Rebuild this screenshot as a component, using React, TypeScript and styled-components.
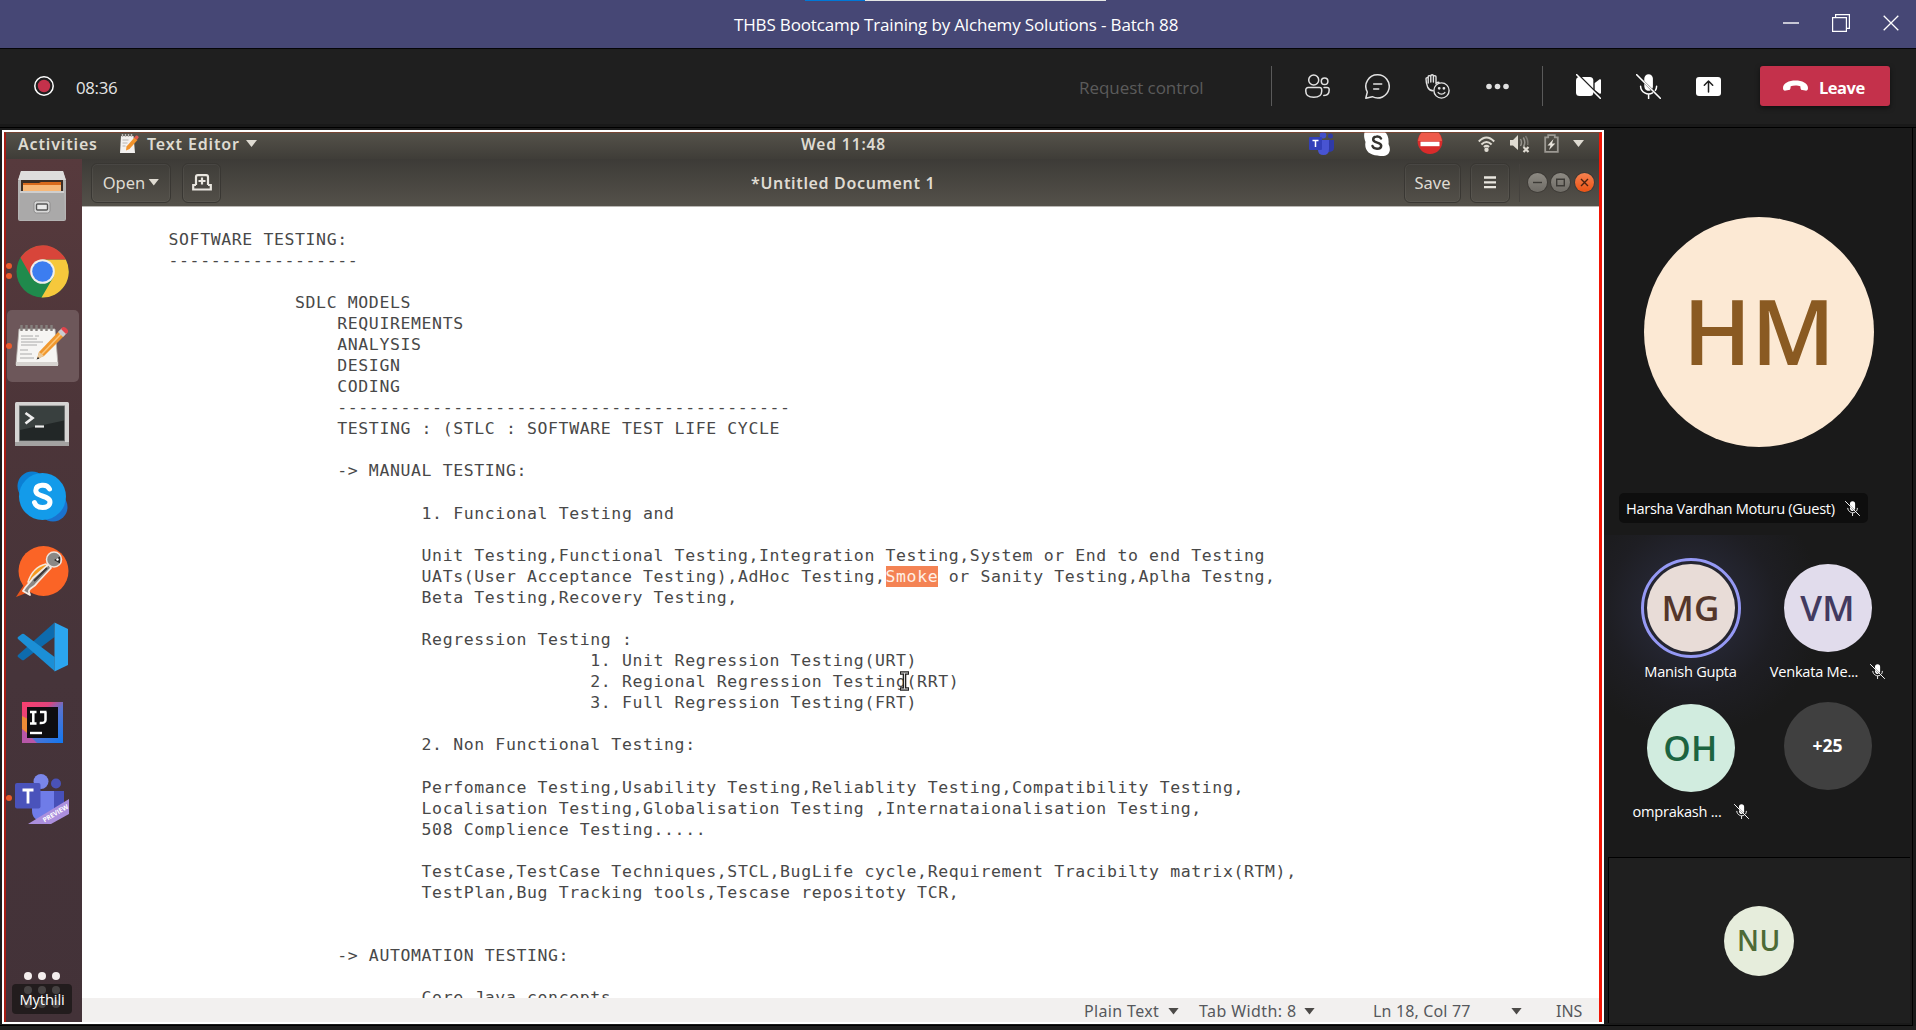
import React from 'react';
import styled, { createGlobalStyle, css } from 'styled-components';

const segoe = `"Open Sans", "Noto Sans", sans-serif`;
const ubuntu = `"Noto Sans", "Open Sans", sans-serif`;
const mono = `"DejaVu Sans Mono", monospace`;

const Global = createGlobalStyle`
  * { box-sizing: border-box; }
  html, body { margin: 0; background: #1a1a1a; overflow: hidden; }
  svg { display: block; flex: none; }
`;

const Window = styled.div`
  width: 1916px;
  height: 1030px;
  display: flex;
  flex-direction: column;
  overflow: hidden;
  background: #1a1a1a;
  font-family: ${segoe};
  color: #fff;
`;

/* Fixed-metric text: $w is the box width, $ls the tracking */
const Label = styled.span<{ $size: number; $ls?: number; $w?: number; $weight?: number; $color?: string; $ui?: boolean }>`
  font-family: ${p => (p.$ui ? ubuntu : segoe)};
  font-size: ${p => p.$size}px;
  letter-spacing: ${p => p.$ls ?? 0}px;
  font-weight: ${p => p.$weight ?? 400};
  color: ${p => p.$color ?? 'inherit'};
  white-space: nowrap;
  flex: none;
  ${p => p.$w && css`width: ${p.$w}px;`}
`;

/* ---------- title bar ---------- */
const TitleBar = styled.header`
  height: 49px;
  flex: none;
  display: grid;
  grid-template-columns: 734px 1fr 133px;
  align-items: center;
  background: #464775;
  border-bottom: 1px solid #050508;
  position: relative;
`;
const ShareStrip = styled.div`
  position: absolute;
  top: 0;
  left: 805px;
  width: 301px;
  height: 1px;
  background: linear-gradient(to right, #0078d7 60px, #e4e6e4 60px);
`;
const TitleText = styled.div`
  grid-column: 2;
  padding-top: 1px;
`;
const WindowButtons = styled.div`
  display: flex;
  align-items: center;
  gap: 33px;
  padding-bottom: 2px;
`;

/* ---------- meeting toolbar ---------- */
const Toolbar = styled.div`
  height: 79px;
  flex: none;
  display: flex;
  align-items: center;
  background: #1f1f1f;
  border-bottom: 1px solid #000;
  box-shadow: inset 0 -3px 0 #191919;
  padding: 0 26px 4px 34px;
`;
const Timer = styled.div`
  display: flex;
  align-items: center;
  gap: 22px;
  flex: 1;
`;
const Lowered = styled.div`
  padding-top: 2px;
  flex: none;
  display: flex;
`;
const Divider = styled.i`
  width: 1px;
  height: 40px;
  background: #5a5a5a;
`;
const IconRow = styled.div<{ $ml: number; $mr: number }>`
  display: flex;
  gap: 35px;
  margin: 0 ${p => p.$mr}px 0 ${p => p.$ml}px;
`;
const LeaveButton = styled.button`
  width: 130px;
  height: 40px;
  padding: 0 0 0 23px;
  border: 0;
  border-radius: 3px;
  background: #c4314b;
  color: #fff;
  display: flex;
  align-items: center;
  gap: 11px;
  box-shadow: 0 2px 5px rgba(0, 0, 0, 0.5);
`;

/* ---------- stage ---------- */
const Stage = styled.main`
  height: 898px;
  flex: none;
  display: flex;
  width: 1913px;
  border-right: 1px solid #000;
  border-bottom: 1px solid #000;
  padding: 2px 0 2px 2px;
`;
const Footer = styled.div`
  flex: 1;
  background: #1f1f1f;
`;
const SharedScreen = styled.section`
  width: 1602px;
  height: 894px;
  flex: none;
  border: 2px solid #fff;
  display: flex;
  flex-direction: column;
  position: relative;
  background: #fff;
  &::after {
    content: '';
    position: absolute;
    inset: 0;
    border-left: 2px solid #a51d14;
    border-right: 3px solid #f01505;
    border-top: 1px solid rgba(150, 60, 35, 0.55);
    pointer-events: none;
  }
`;
const GnomeBar = styled.div`
  height: 27px;
  flex: none;
  display: flex;
  align-items: center;
  padding: 0 0 4px 14px;
  color: #dfdbd2;
  background: linear-gradient(#55524a, #3f3d38);
`;
const Desktop = styled.div`
  flex: 1;
  display: flex;
  min-height: 0;
`;
const Dock = styled.nav`
  width: 78px;
  flex: none;
  padding: 0 0 0 2px;
  background: linear-gradient(#573a3d, #4c3539 30%, #46343a 60%, #433238);
  display: flex;
  flex-direction: column;
  position: relative;
`;
const DockItem = styled.div<{ $active?: boolean; $drop?: number }>`
  height: 72px;
  width: 72px;
  margin: 1px 0 2.2px 1px;
  padding: ${p => p.$drop ?? 0}px 2px 0 0;
  flex: none;
  border-radius: 5px;
  display: flex;
  align-items: center;
  justify-content: center;
  background: ${p => (p.$active ? '#6d575a' : 'transparent')};
  position: relative;
`;
const RunDots = styled.div`
  position: absolute;
  left: -1px;
  top: 0;
  height: 100%;
  display: flex;
  flex-direction: column;
  justify-content: center;
  gap: 4px;
  i { width: 6px; height: 6px; border-radius: 50%; background: #ea5b2d; }
`;
const AppGrid = styled.div`
  margin: auto 0 14px 18px;
  display: grid;
  grid-template-columns: repeat(3, 8px);
  gap: 6px;
  i { width: 8px; height: 8px; border-radius: 50%; background: #f4eeee; }
`;
const PresenterTag = styled.div`
  position: absolute;
  left: 8px;
  bottom: 8px;
  width: 60px;
  height: 30px;
  border-radius: 4px;
  background: rgba(26, 22, 23, 0.8);
  color: #fff;
  display: flex;
  align-items: center;
  justify-content: center;
  z-index: 2;
`;
const Editor = styled.div`
  flex: 1;
  min-width: 0;
  display: flex;
  flex-direction: column;
`;
const HeaderBar = styled.div`
  height: 47px;
  flex: none;
  display: flex;
  align-items: center;
  padding: 0 0 0 9px;
  color: #dfdbd2;
  background: linear-gradient(#3d3b37, #54514a);
`;
const HeaderButton = styled.div<{ $w: number; $ml?: number }>`
  width: ${p => p.$w}px;
  height: 40px;
  margin-left: ${p => p.$ml ?? 0}px;
  padding-bottom: 1px;
  flex: none;
  border: 1px solid #393733;
  border-radius: 6px;
  box-shadow: inset 0 0 0 1px rgba(255, 255, 255, 0.05);
  display: flex;
  align-items: center;
  justify-content: center;
  gap: 3px;
`;
const Arrow = styled.i<{ $c?: string; $ml?: number; $mr?: number }>`
  flex: none;
  width: 11px;
  height: 7px;
  margin: 0 ${p => p.$mr ?? 0}px 0 ${p => p.$ml ?? 0}px;
  background: ${p => p.$c ?? '#dfdbd2'};
  clip-path: polygon(0 0, 100% 0, 50% 100%);
`;
const Round = styled.i<{ $close?: boolean }>`
  width: 19px;
  height: 19px;
  margin-right: 4.3px;
  flex: none;
  border-radius: 50%;
  background: ${p => (p.$close ? 'linear-gradient(#f5814f, #ec5315)' : 'linear-gradient(#8d8a83, #6f6c66)')};
  box-shadow: 0 0 0 1px rgba(45, 43, 40, 0.4);
  display: flex;
  align-items: center;
  justify-content: center;
`;
const Separator = styled.i`
  width: 1px;
  height: 38px;
  background: #45423e;
  margin: 0 8px 0 9px;
`;
const Page = styled.pre`
  flex: 1;
  min-height: 0;
  overflow: hidden;
  margin: 0;
  padding: 21.6px 0 0 86.5px;
  background: #fff;
  border-top: 1px solid #b9b7b3;
  color: #484848;
  font-family: ${mono};
  font-size: 16.5px;
  letter-spacing: 0.61px;
  line-height: 21.09px;
`;
const TextLine = styled.div`
  height: 21.09px;
  position: relative;
`;
const Selected = styled.mark`
  background: #f48354;
  color: #fff0e6;
  display: inline-block;
  height: 21.09px;
`;
const Pointer = styled.span`
  position: absolute;
  left: 731px;
  top: 0;
`;
const StatusBar = styled.div`
  height: 24px;
  flex: none;
  display: flex;
  align-items: center;
  background: #f2f0ef;
  color: #56585c;
  padding: 2px 0 0 1002px;
`;

/* ---------- participants ---------- */
const Roster = styled.aside`
  flex: 1;
  display: flex;
  flex-direction: column;
  align-items: center;
`;
const Spotlight = styled.div`
  height: 405px;
  width: 100%;
  padding: 87px 0 0 40px;
  flex: none;
`;
const Disc = styled.div<{ $d: number; $bg: string; $fg: string; $size: number; $ls?: number; $weight?: number; $lift?: number }>`
  width: ${p => p.$d}px;
  height: ${p => p.$d}px;
  padding-bottom: ${p => p.$lift ?? 2}px;
  flex: none;
  border-radius: 50%;
  background: ${p => p.$bg};
  color: ${p => p.$fg};
  display: flex;
  align-items: center;
  justify-content: center;
  font-size: ${p => p.$size}px;
  font-weight: ${p => p.$weight ?? 600};
  letter-spacing: ${p => p.$ls ?? 0}px;
  line-height: 1;
`;
const NameTag = styled.div`
  width: 249px;
  height: 30px;
  margin: 46px 0 0 -25px;
  padding: 0 8px 0 7px;
  border-radius: 5px;
  background: #0e0e0e;
  display: flex;
  align-items: center;
  justify-content: space-between;
`;
const PeopleGrid = styled.div`
  width: 100%;
  height: 322px;
  flex: none;
  padding: 23px 0 0 18px;
  display: grid;
  grid-template-columns: 137px 137px;
  grid-template-rows: 140px 140px;
  background: radial-gradient(circle at 88px 73px, #282834 0, #242530 50px, #1e1e23 85px, #1a1a1a 130px);
`;
const Person = styled.div<{ $top?: number }>`
  display: flex;
  flex-direction: column;
  align-items: center;
  padding-top: ${p => p.$top ?? 6}px;
`;
const Ring = styled.div`
  width: 100px;
  height: 100px;
  margin: -6px 0;
  flex: none;
  border: 3px solid #9599f5;
  border-radius: 50%;
  display: flex;
  align-items: center;
  justify-content: center;
`;
const PersonName = styled.div`
  margin-top: 7px;
  height: 24px;
  display: flex;
  align-items: center;
  gap: 12px;
`;
const SelfTile = styled.div`
  width: 302px;
  flex: 1;
  align-self: flex-start;
  margin-left: 4px;
  padding-right: 1px;
  background: #1f1f1f;
  border-left: 1px solid #000;
  border-top: 1px solid #000;
  display: flex;
  align-items: center;
  justify-content: center;
`;

/* ---------- icons ---------- */
const line = { fill: 'none', stroke: '#e2e2e2', strokeWidth: 1.5, strokeLinecap: 'round', strokeLinejoin: 'round' } as const;

const MicOff = ({ size = 25 }: { size?: number }) => (
  <svg width={size} height={size} viewBox="0 0 25 25">
    <path d="M8.3 7V4.6a4.3 4.3 0 0 1 8.6 0v8a4.3 4.3 0 0 1-.6 2.2zM8.3 9.6l6.4 6.6a4.3 4.3 0 0 1-6.4-3.6z" fill="#fff" />
    <path d="M4.6 12.2a8 8 0 0 0 12 6.6M20.6 12.2c0 1.6-.4 3-1.2 4.2M12.6 20.5v4" fill="none" stroke="#fff" strokeWidth="1.5" strokeLinecap="round" />
    <path d="M.7.7l23.6 23.6" stroke="#fff" strokeWidth="1.6" strokeLinecap="round" />
  </svg>
);
const People = () => (
  <svg width="25" height="25" viewBox="0 0 25 25" {...line}>
    <circle cx="8.7" cy="6" r="5" />
    <circle cx="19.6" cy="7.3" r="3.3" />
    <path d="M3 13.6h11.5a2.2 2.2 0 0 1 2.2 2.2v1.4c0 4-3 6-7.9 6s-8-2-8-6v-1.4a2.2 2.2 0 0 1 2.2-2.2z" />
    <path d="M19 13.6h3a2.2 2.2 0 0 1 2.2 2.2c0 4.2-1.8 5.7-5.4 5.7" />
  </svg>
);
const Chat = () => (
  <svg width="25" height="25" viewBox="0 0 25 25" {...line}>
    <path d="M12.7.8a11.6 11.6 0 1 1-5.4 21.9L.8 24.2l1.5-6.2A11.6 11.6 0 0 1 12.7.8z" />
    <path d="M8.7 10h8M8.7 15h5" />
  </svg>
);
const Reactions = () => (
  <svg width="25" height="25" viewBox="0 0 25 25" {...line} strokeWidth="1.4">
    <path d="M8 16.8c-2.600-.2-4.300-1.400-5.200-3.400C1.600 10.500 1 7.500 1 4.700c0-1.500 2.200-1.500 2.200 0V9M3.200 8V2.700c0-1.500 2.600-1.500 2.600 0V8M5.800 8V1.900c0-1.500 2.600-1.500 2.600 0V8M8.400 8V2.700c0-1.500 2.600-1.500 2.600 0v7c1-1.400 2-1.700 3-1.200" />
    <circle cx="16.5" cy="16.5" r="7.6" />
    <path d="M13.2 18.6c1.5 2 5.1 2 6.600 0" />
    <circle cx="14.2" cy="14.3" r=".7" fill="#e2e2e2" />
    <circle cx="18.9" cy="14.3" r=".7" fill="#e2e2e2" />
  </svg>
);
const Dots = () => (
  <svg width="25" height="25" viewBox="0 0 25 25" fill="#e0e0e0">
    <circle cx="4" cy="12.5" r="2.8" /><circle cx="12.5" cy="12.5" r="2.8" /><circle cx="21" cy="12.5" r="2.8" />
  </svg>
);
const CamOff = () => (
  <svg width="25" height="25" viewBox="0 0 25 25">
    <rect x="0" y="3" width="17.3" height="19" rx="3.5" fill="#fff" />
    <path d="M18.7 9l5-3.7c.6-.4 1.3 0 1.3.7v13c0 .7-.7 1.1-1.3.7l-5-3.7z" fill="#fff" />
    <path d="M1.8.2L25.5 24" stroke="#1f1f1f" strokeWidth="1.8" />
    <path d="M.7.7l23.6 23.6" stroke="#fff" strokeWidth="1.6" strokeLinecap="round" />
  </svg>
);
const ShareIcon = () => (
  <svg width="25" height="25" viewBox="0 0 25 25">
    <rect x="0" y="3" width="25" height="19" rx="3" fill="#fff" />
    <path d="M12.5 18V7.5M8.3 11.2l4.200-4.200 4.200 4.200" fill="none" stroke="#1f1f1f" strokeWidth="1.5" strokeLinecap="round" strokeLinejoin="round" />
  </svg>
);
const HangUp = () => (
  <svg width="25" height="12" viewBox="0 0 25 12">
    <path d="M12.5.5C19 .5 25 3 25 8c0 2-1 2.9-2.8 2.6l-2.7-.5c-1.3-.3-1.9-1-2-2.2l-.2-1.7c-2.5-1-7-1-9.6 0l-.2 1.7c-.1 1.2-.7 1.9-2 2.2l-2.7.5C1 10.9 0 10 0 8 0 3 6 .5 12.5.5z" fill="#fff" />
  </svg>
);

const NotePad = () => (
  <svg width="54" height="44" viewBox="0 0 54 44">
    <path d="M4 5h36l3 36H1z" fill="#f6f5f3" stroke="#b5b1ad" strokeWidth=".8" />
    <path d="M1 38h42v4H1z" fill="#d6d3d0" />
    <path d="M6.5 1v6M11.5 1v6M16.5 1v6M21.5 1v6M26.5 1v6M31.5 1v6M36.5 1v6" stroke="#85817e" strokeWidth="2.4" />
    <path d="M6 12h12M20 12h4M6 15h16M6 18h22M6 21h16M5 26h8M5 30h12M5 34h14" stroke="#aaa" strokeWidth="1" />
    <path d="M24 28L45 6l5 5-21 21-7 3z" fill="#f0982f" />
    <path d="M26 31L47 9" stroke="#fbc67a" strokeWidth="1.5" />
    <path d="M24 28l5 4-7 3z" fill="#e8c99c" />
    <path d="M23 33l-1.5 2.5 3-1z" fill="#222" />
    <path d="M43 8l4-4 5 5-4 4z" fill="#c9ccd0" />
    <path d="M46 5c2-3 4-2 6 0s1 4-1 5z" fill="#e0444c" />
  </svg>
);
const NotePadSmall = () => (
  <svg width="19" height="20" viewBox="0 0 19 20">
    <path d="M1 2h12.5l1.5 17H0z" fill="#f3f1ef" />
    <path d="M2.5 0v3M5.5 0v3M8.5 0v3M11.5 0v3" stroke="#bdb9b5" strokeWidth="1.5" />
    <path d="M2.5 6h6M2.5 9h5M2.5 12h3" stroke="#b7b4b1" />
    <path d="M6.5 12.5L14.5 3.5l3 2.5-8 9-3.5 1.5z" fill="#f0922a" />
    <path d="M14 3.8l2-2.3q2.500-.5 2.700 2l-1.700 2.300z" fill="#e2574f" />
  </svg>
);
const Files = () => (
  <svg width="50" height="52" viewBox="0 0 50 52">
    <path d="M4 1h42l3 10v38a2 2 0 0 1-2 2H3a2 2 0 0 1-2-2V11z" fill="#b4b3b3" />
    <path d="M4 1h42l3 9H1z" fill="#dedddc" />
    <rect x="4" y="10" width="42" height="13" fill="#3b2d25" />
    <path d="M6 13h16l2-1h20v9H6z" fill="#d96a1c" />
    <path d="M6 15h38v6H6z" fill="#f8b878" />
    <path d="M3 21h44l1 29H2z" fill="#aaa9a9" />
    <path d="M3 21h44v2H3z" fill="#cfcece" />
    <rect x="17" y="31" width="16" height="12" rx="2.5" fill="#d8d8d8" stroke="#8e8d8d" />
    <rect x="19.5" y="34" width="11" height="6" rx="1" fill="#e9e9e9" stroke="#555" strokeWidth="1.4" />
  </svg>
);
const Chrome = () => (
  <svg width="53" height="53" viewBox="0 0 53 53">
    <circle cx="26.5" cy="26.5" r="26" fill="#1f8a4c" />
    <path d="M26.5 14.5h23.300A26 26 0 0 1 25.5 52.5L37.5 32z" fill="#f6c83c" />
    <path d="M16 33L4.5 12.7a26 26 0 0 1 45.3 1.800H26.5z" fill="#d8453a" />
    <circle cx="26.5" cy="26.5" r="12.3" fill="#f1efec" />
    <circle cx="26.5" cy="26.5" r="10.3" fill="#3c7df0" />
  </svg>
);
const Terminal = () => (
  <svg width="54" height="44" viewBox="0 0 54 44">
    <rect width="54" height="44" rx="1.5" fill="#d5d4d3" />
    <rect y="40" width="54" height="4" fill="#a3a2a1" />
    <rect x="4.5" y="4" width="45" height="35" fill="#222727" stroke="#6e7070" />
    <path d="M5 4.5h44v14L5 28z" fill="#39403f" />
    <path d="M10.5 11l7 5-7 5.500" fill="none" stroke="#eee" strokeWidth="2.7" />
    <path d="M20 24.5h9" stroke="#eee" strokeWidth="2.2" />
  </svg>
);
const SkypeDock = () => (
  <svg width="51" height="51" viewBox="0 0 51 51">
    <circle cx="15" cy="15" r="14.5" fill="#0b7fd4" />
    <circle cx="36" cy="36" r="14.5" fill="#1a72cf" />
    <circle cx="25.5" cy="25.5" r="23.5" fill="#139bea" />
    <path d="M32.5 18c-1.500-3-4.500-4-7.500-3.700-4 .4-6.200 2.500-6.200 5.200 0 7 14.200 4.500 14.200 11.500 0 3.500-3.500 5.500-7.500 5.500s-7-2-8-5" fill="none" stroke="#fff" strokeWidth="5" strokeLinecap="round" />
  </svg>
);
const Postman = () => (
  <svg width="53" height="53" viewBox="0 0 53 53">
    <path d="M0 52l9-14 9 7z" fill="#e8541a" />
    <circle cx="27.5" cy="26" r="25" fill="#fb6426" />
    <path d="M30 19c-9 2-15 9-18 18l6 1 14-15z" fill="#f59a1e" stroke="#f6e6d8" strokeWidth="1.5" />
    <path d="M33 19l2 4-14 15c-3 5-9 5-8 9l1 3-7-4c3-6 7-8 10-13z" fill="#8b8784" stroke="#f4ebe4" strokeWidth="1.8" strokeLinejoin="round" />
    <path d="M31 23L18 36" stroke="#3a3736" strokeWidth="1.8" />
    <circle cx="38" cy="14.5" r="7.5" fill="#8a8886" stroke="#eee5df" strokeWidth="1.5" />
    <path d="M38 15l6-3.5v7z" fill="#2c2a29" />
    <circle cx="41.5" cy="14.5" r="1.2" fill="#fff" />
  </svg>
);
const VsCode = () => (
  <svg width="51" height="50" viewBox="0 0 51 50">
    <path d="M37 1L1 33q-1 1 0 2l4 3q1 .6 2 0L37.5 15z" fill="#0d6bad" />
    <path d="M37.5 35L7 12q-1-.6-2 0l-4 3q-1 1 0 2l36.5 32z" fill="#1b8fd6" />
    <path d="M37.5.5L51 7v36l-13.5 6.5z" fill="#2ba5ef" />
  </svg>
);
const BadgeText = styled.text`
  font: 700 6.5px ${segoe};
  fill: #fff;
`;
const IntelliJ = () => (
  <svg width="41" height="41" viewBox="0 0 41 41">
    <defs>
      <linearGradient id="ij" x1="0" y1="0" x2="1" y2="1">
        <stop offset="0" stopColor="#fb3f6e" /><stop offset=".35" stopColor="#e0447c" /><stop offset=".55" stopColor="#5a74cf" /><stop offset="1" stopColor="#0f78f2" />
      </linearGradient>
    </defs>
    <rect width="41" height="41" fill="url(#ij)" />
    <path d="M0 14l6 3v15l-6-5z" fill="#ee8b36" />
    <path d="M0 27l7 6 8 8H0z" fill="#b757a8" />
    <rect x="5" y="5" width="31" height="31" fill="#0e0d10" />
    <path d="M8 10h6.5M11.3 10v11.5M8 21.5h6.5M18 10h6.500M23.5 10V18q0 3.5-5.800 3" fill="none" stroke="#fff" strokeWidth="2.5" />
    <path d="M8 31h12" stroke="#fff" strokeWidth="2.4" />
  </svg>
);
const TeamsDock = () => (
  <svg width="54" height="51" viewBox="0 0 54 51">
    <circle cx="41" cy="9.5" r="5" fill="#4a52b8" />
    <path d="M36 17h13v18c0 6-6 8-13 8z" fill="#4750b8" />
    <circle cx="26" cy="7.5" r="7.5" fill="#7a86ea" />
    <path d="M17 17h22v18q0 12-11 12T17 36z" fill="#6f7ce8" />
    <rect x="0" y="9" width="25.5" height="25.5" rx="2" fill="#4a53bb" />
    <path d="M7.5 16h11M13 16v13.5" stroke="#fff" strokeWidth="2.8" />
    <path d="M13 50L54 25v15L36 50z" fill="#ab8fdd" />
    <BadgeText transform="translate(29.5 48.5) rotate(-31)">PREVIEW</BadgeText>
  </svg>
);
const TeamsTray = () => (
  <svg width="26" height="24" viewBox="0 0 26 24">
    <circle cx="21.5" cy="4" r="2.5" fill="#2f3aa5" />
    <path d="M17 8h8v8q0 4-6 4z" fill="#2f3aa8" />
    <circle cx="14" cy="3.3" r="3.3" fill="#4350c9" />
    <path d="M9 8h11v9q0 6-5.5 6T9 18z" fill="#4854d2" />
    <rect x="0" y="5" width="13" height="13" rx="1" fill="#3340ba" />
    <path d="M3.5 8.5h6M6.5 8.5V15" stroke="#fff" strokeWidth="1.5" />
  </svg>
);
const SkypeTray = () => (
  <svg width="26" height="25" viewBox="0 0 26 25">
    <path d="M1 0h19c4 3 5 8 4.5 13 2 4 2 8-1 10.5s-8 1.5-10 1C5 24 0 19 1.5 11 0 7-.5 3 1 0z" fill="#fff" />
    <path d="M17 7.5c-1-2-3-2.2-4.5-2-2.2.2-3.3 1.4-3.3 3 0 4 8 2.3 8 6.2 0 2-2 3-4.2 3s-4-1-4.5-2.7" fill="none" stroke="#35332f" strokeWidth="2.5" strokeLinecap="round" />
  </svg>
);
const NoEntry = () => (
  <svg width="26" height="24" viewBox="0 0 26 24">
    <path d="M4.500.5h17a12.4 12.4 0 1 1-17 0z" fill="#d92b2b" />
    <path d="M4.500.5h17q3 3.500 3.500 8.500H1q.5-5 3.500-8.500z" fill="#ee5a4a" />
    <rect x="3.5" y="9.7" width="19" height="4.5" fill="#fff" />
  </svg>
);
const Wifi = () => (
  <svg width="17" height="16" viewBox="0 0 17 16" fill="none" stroke="#dfdbd2" strokeWidth="2">
    <path d="M.8 5.5q7.7-8 15.4 0M3.4 8.5q5.1-5 10.2 0M5.9 11q2.6-2.3 5.2 0" /><circle cx="8.5" cy="13.7" r="1.2" fill="#dfdbd2" />
  </svg>
);
const Volume = () => (
  <svg width="20" height="18" viewBox="0 0 20 18">
    <path d="M0 5h3l5-5v15l-5-4.5H0z" fill="#dfdbd2" />
    <path d="M10.5 4q2 3.5 0 7M13.3 2.5q3 5 0 9.5" fill="none" stroke="#96938d" strokeWidth="1.5" />
    <path d="M15.5 1q3 4 2.2 9" fill="none" stroke="#7c7973" strokeWidth="1.5" />
    <path d="M13.5 12l5 5M18.5 12l-5 5" stroke="#dfdbd2" strokeWidth="2.2" />
  </svg>
);
const Battery = () => (
  <svg width="15" height="19" viewBox="0 0 15 19">
    <path d="M1.2 3.3h3V1.2h6.6v2.1h3v14.5H1.2z" fill="none" stroke="#9c9993" strokeWidth="1.8" />
    <path d="M9.5 5L3.5 11.5h3L5 16l6.3-6.5H8z" fill="#e8e4dc" />
  </svg>
);
const NewTab = () => (
  <svg width="20" height="17" viewBox="0 0 20 17" fill="none" stroke="#e9e6df" strokeWidth="2.2">
    <path d="M4 11V3q0-1.8 1.8-1.8h8.4Q16 1.2 16 3v8" /><path d="M4 11H1.2v4.5h17.6V11H16M10 3.5v7M6.5 7h7" />
  </svg>
);
const IBeam = () => (
  <svg width="9" height="20" viewBox="0 0 9 20" fill="none">
    <path d="M0 2h9M0 18h9M4.5 2v16" stroke="#222" strokeWidth="3.6" />
    <path d="M1 2h7M1 18h7M4.5 2v16" stroke="#ddd" strokeWidth="1" />
  </svg>
);

/* ---------- document ---------- */
const doc: [number, string][] = [
  [0, 'SOFTWARE TESTING:'],
  [0, '-'.repeat(18)],
  [0, ''],
  [12, 'SDLC MODELS'],
  [16, 'REQUIREMENTS'],
  [16, 'ANALYSIS'],
  [16, 'DESIGN'],
  [16, 'CODING'],
  [16, '-'.repeat(43)],
  [16, 'TESTING : (STLC : SOFTWARE TEST LIFE CYCLE'],
  [0, ''],
  [16, '-> MANUAL TESTING:'],
  [0, ''],
  [24, '1. Funcional Testing and'],
  [0, ''],
  [24, 'Unit Testing,Functional Testing,Integration Testing,System or End to end Testing'],
  [24, 'UATs(User Acceptance Testing),AdHoc Testing,[Smoke] or Sanity Testing,Aplha Testng,'],
  [24, 'Beta Testing,Recovery Testing,'],
  [0, ''],
  [24, 'Regression Testing :'],
  [40, '1. Unit Regression Testing(URT)'],
  [40, '2. Regional Regression Testing(RRT)'],
  [40, '3. Full Regression Testing(FRT)'],
  [0, ''],
  [24, '2. Non Functional Testing:'],
  [0, ''],
  [24, 'Perfomance Testing,Usability Testing,Reliablity Testing,Compatibility Testing,'],
  [24, 'Localisation Testing,Globalisation Testing ,Internataionalisation Testing,'],
  [24, '508 Complience Testing.....'],
  [0, ''],
  [24, 'TestCase,TestCase Techniques,STCL,BugLife cycle,Requirement Tracibilty matrix(RTM),'],
  [24, 'TestPlan,Bug Tracking tools,Tescase repositoty TCR,'],
  [0, ''],
  [0, ''],
  [16, '-> AUTOMATION TESTING:'],
  [0, ''],
  [24, 'Core Java concepts'],
];
const POINTER_LINE = 21;

const renderLine = (text: string) => {
  const m = text.match(/^(.*)\[(.*)\](.*)$/);
  return m ? <>{m[1]}<Selected>{m[2]}</Selected>{m[3]}</> : text;
};

const dockItems = [
  { icon: <Files />, dots: 0 },
  { icon: <Chrome />, dots: 2 },
  { icon: <NotePad />, dots: 1, active: true },
  { icon: <Terminal />, dots: 0, drop: 4 },
  { icon: <SkypeDock />, dots: 0 },
  { icon: <Postman />, dots: 0 },
  { icon: <VsCode />, dots: 0 },
  { icon: <IntelliJ />, dots: 0 },
  { icon: <TeamsDock />, dots: 1, drop: 4 },
];

export default function App() {
  return (
    <Window>
      <Global />
      <TitleBar>
        <ShareStrip />
        <TitleText><Label $size={17} $ls={-0.16}>THBS Bootcamp Training by Alchemy Solutions - Batch 88</Label></TitleText>
        <WindowButtons>
          <svg width="16" height="16" viewBox="0 0 16 16"><path d="M0 8h16" stroke="#fff" strokeWidth="1.4" /></svg>
          <svg width="18" height="18" viewBox="0 0 18 18" fill="none" stroke="#fff" strokeWidth="1.2"><path d="M.6 3.6h13.8v13.8H.6zM3.6 3.6V.6h13.8v13.8h-3" /></svg>
          <svg width="16" height="16" viewBox="0 0 16 16"><path d="M.7.7l14.6 14.6M15.3.7L.7 15.3" stroke="#fff" strokeWidth="1.3" /></svg>
        </WindowButtons>
      </TitleBar>

      <Toolbar>
        <Timer>
          <svg width="20" height="20" viewBox="0 0 20 20"><circle cx="10" cy="10" r="9.2" fill="none" stroke="#fff" strokeWidth="1.5" /><circle cx="10" cy="10" r="6.2" fill="#c4314b" /></svg>
          <Lowered><Label $size={16.8} $ls={-0.3} $color="#e6e6e6">08:36</Label></Lowered>
        </Timer>
        <Lowered><Label $size={17} $ls={-0.05} $w={124} $color="#5b5b5b">Request control</Label></Lowered>
        <IconRow $ml={68} $mr={0}><Divider /></IconRow>
        <IconRow $ml={33} $mr={32}><People /><Chat /><Reactions /><Dots /></IconRow>
        <Divider />
        <IconRow $ml={33} $mr={39}><CamOff /><MicOff /><ShareIcon /></IconRow>
        <LeaveButton><HangUp /><Lowered><Label $size={16.5} $weight={700} $ls={-0.5}>Leave</Label></Lowered></LeaveButton>
      </Toolbar>

      <Stage>
        <SharedScreen>
          <GnomeBar>
            <Label $ui $size={16} $weight={600} $ls={0.85} $w={102}>Activities</Label>
            <NotePadSmall />
            <IconRow $ml={8} $mr={0}><Label $ui $size={16} $weight={600} $ls={0.85} $w={94}>Text Editor</Label></IconRow>
            <Arrow $ml={5} $mr={544} />
            <Label $ui $size={15.5} $weight={600} $ls={0.9} $w={508}>Wed 11:48</Label>
            <TeamsTray />
            <IconRow $ml={29} $mr={27}><SkypeTray /></IconRow>
            <NoEntry />
            <IconRow $ml={35} $mr={15}><Wifi /></IconRow>
            <Volume />
            <IconRow $ml={14} $mr={14}><Battery /></IconRow>
            <Arrow />
          </GnomeBar>
          <Desktop>
            <Dock>
              {dockItems.map((d, i) => (
                <DockItem key={i} $active={d.active} $drop={d.drop}>
                  <RunDots>{Array.from({ length: d.dots }, (_, k) => <i key={k} />)}</RunDots>
                  {d.icon}
                </DockItem>
              ))}
              <AppGrid>{Array.from({ length: 9 }, (_, k) => <i key={k} />)}</AppGrid>
              <PresenterTag><Label $size={14.8} $ls={-0.15}>Mythili</Label></PresenterTag>
            </Dock>
            <Editor>
              <HeaderBar>
                <HeaderButton $w={80}><Label $ui $size={16.5}>Open</Label><Arrow /></HeaderButton>
                <HeaderButton $w={39} $ml={11}><NewTab /></HeaderButton>
                <IconRow $ml={530} $mr={470}><Label $ui $size={16} $weight={600} $ls={0.66} $w={183}>*Untitled Document 1</Label></IconRow>
                <HeaderButton $w={57}><Label $ui $size={16.5}>Save</Label></HeaderButton>
                <HeaderButton $w={40} $ml={9}>
                  <svg width="12" height="13" viewBox="0 0 12 13"><path d="M0 1.5h12M0 6.3h12M0 11.2h12" stroke="#e9e6df" strokeWidth="2.3" /></svg>
                </HeaderButton>
                <Separator />
                <Round><svg width="9" height="9" viewBox="0 0 9 9"><path d="M0 4.5h9" stroke="#3c3a36" strokeWidth="1.4" /></svg></Round>
                <Round><svg width="9" height="9" viewBox="0 0 9 9"><path d="M.7 1.2h7.6v6.6H.7z" fill="none" stroke="#3c3a36" strokeWidth="1.4" /></svg></Round>
                <Round $close><svg width="9" height="9" viewBox="0 0 9 9"><path d="M1 1l7 7M8 1L1 8" stroke="#4a2110" strokeWidth="1.4" /></svg></Round>
              </HeaderBar>
              <Page>
                {doc.map(([indent, text], i) => (
                  <TextLine key={i}>
                    {' '.repeat(indent)}{renderLine(text)}
                    {i === POINTER_LINE && <Pointer><IBeam /></Pointer>}
                  </TextLine>
                ))}
              </Page>
              <StatusBar>
                <Label $ui $size={16} $ls={0.35} $w={76}>Plain Text</Label><Arrow $c="#4c4a48" $ml={8} $mr={20} />
                <Label $ui $size={16} $ls={0.4} $w={98}>Tab Width: 8</Label><Arrow $c="#4c4a48" $ml={7} $mr={58} />
                <Label $ui $size={16} $ls={0.15} $w={98}>Ln 18, Col 77</Label><Arrow $c="#4c4a48" $ml={40} $mr={34} />
                <Label $ui $size={16}>INS</Label>
              </StatusBar>
            </Editor>
          </Desktop>
        </SharedScreen>

        <Roster>
          <Spotlight>
            <Disc $d={230} $bg="#fce9d4" $fg="#8a5a22" $size={91} $weight={650} $lift={3}>HM</Disc>
            <NameTag><Label $size={14.6} $ls={-0.3}>Harsha Vardhan Moturu (Guest)</Label><MicOff size={15} /></NameTag>
          </Spotlight>
          <PeopleGrid>
            <Person>
              <Ring><Disc $d={88} $bg="#e8dcd7" $fg="#54362a" $size={35} $ls={0.3}>MG</Disc></Ring>
              <PersonName><Label $size={14.6} $ls={-0.25}>Manish Gupta</Label></PersonName>
            </Person>
            <Person>
              <Disc $d={88} $bg="#e1dcec" $fg="#423a60" $size={35} $ls={0.3}>VM</Disc>
              <PersonName><Label $size={14.6} $ls={-0.25}>Venkata Me...</Label><MicOff size={15} /></PersonName>
            </Person>
            <Person>
              <Disc $d={88} $bg="#d1ecdf" $fg="#1c6440" $size={35} $ls={0.3}>OH</Disc>
              <PersonName><Label $size={14.6} $ls={-0.25}>omprakash ...</Label><MicOff size={15} /></PersonName>
            </Person>
            <Person $top={4}>
              <Disc $d={88} $bg="#404040" $fg="#fff" $size={17.5} $weight={700} $lift={0}>+25</Disc>
            </Person>
          </PeopleGrid>
          <SelfTile><Disc $d={70} $bg="#e6eddc" $fg="#4d6a36" $size={28} $ls={0.6}>NU</Disc></SelfTile>
        </Roster>
      </Stage>
      <Footer />
    </Window>
  );
}
